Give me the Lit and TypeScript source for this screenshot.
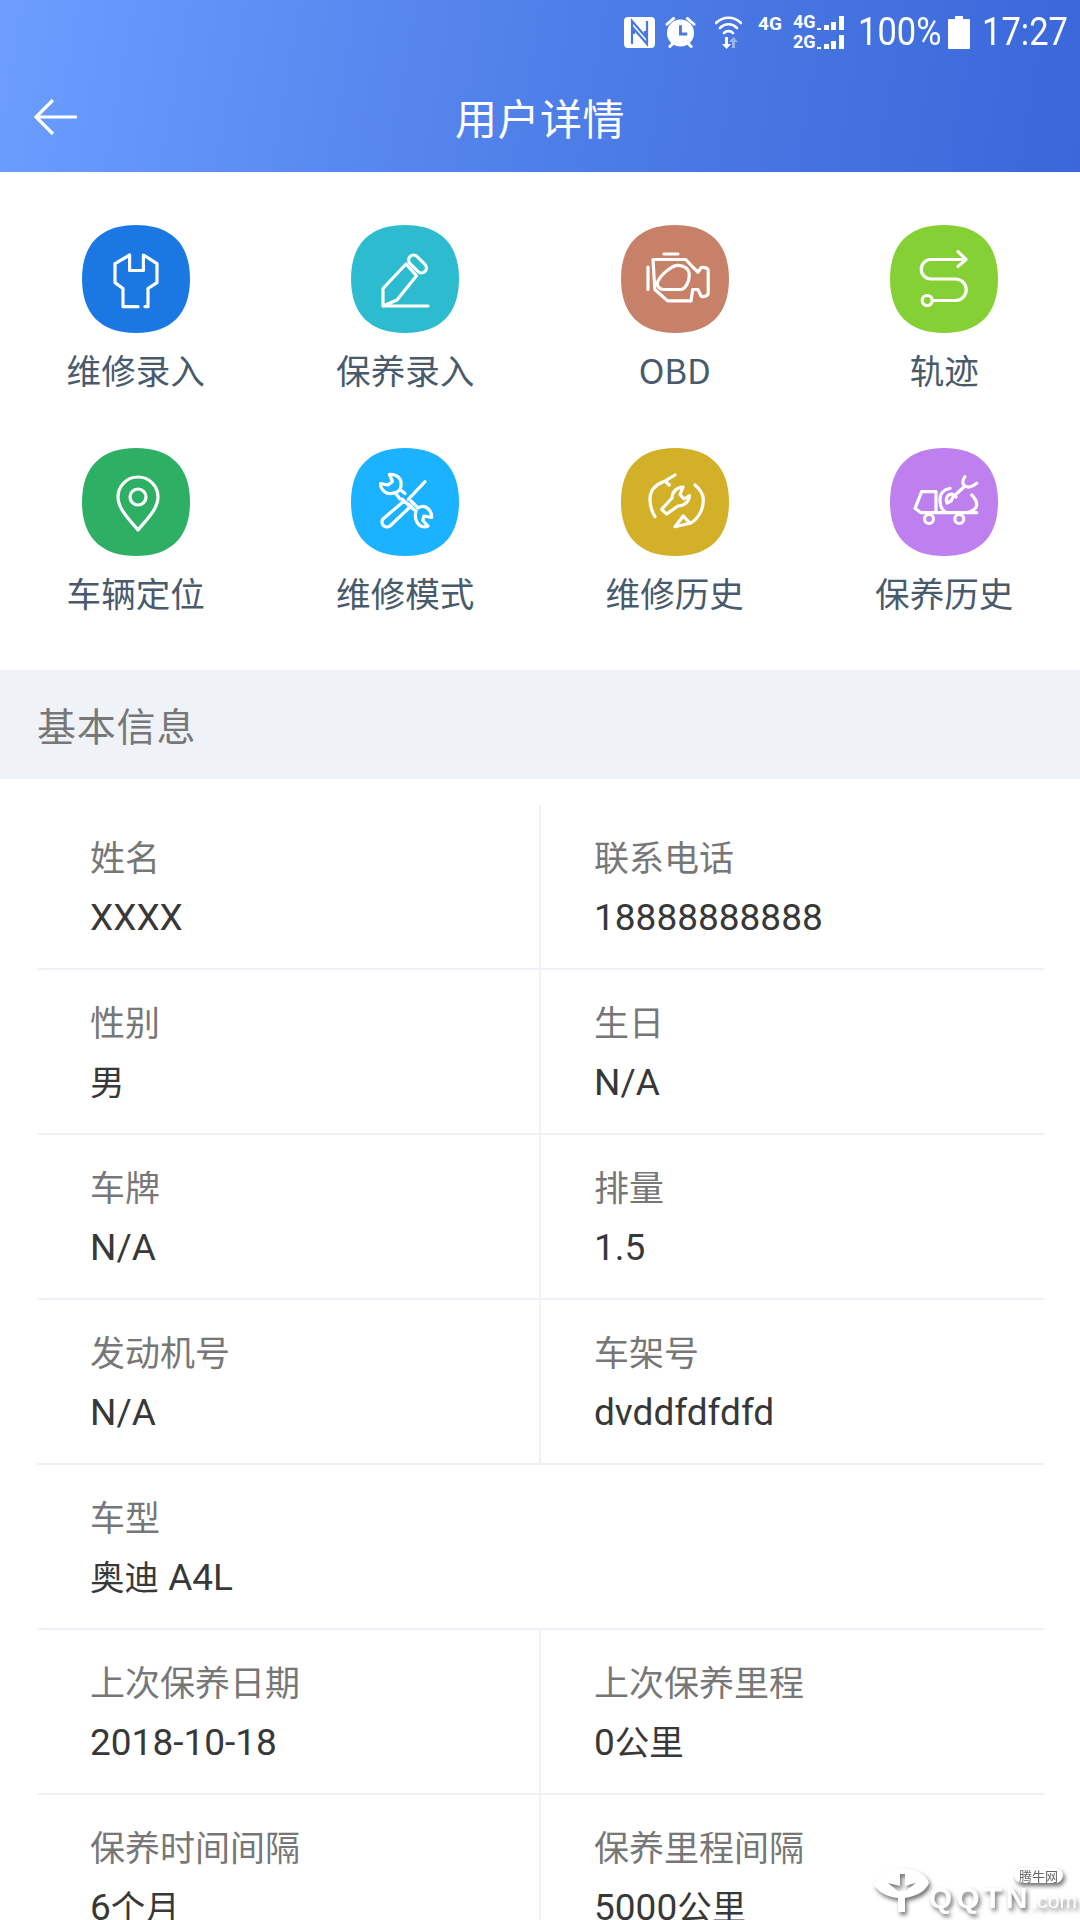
import { LitElement, html, css, svg } from "lit";
import { customElement } from "lit/decorators.js";

const menu = [
  { label: "维修录入", color: "#1b78e2", art: svg`<path d="M56 81.7H41V63.5L33 57.6V38.6L47.6 30V45.5H61.4V30L75 38.6V57.6L66 63.5V81.7H63"/>` },
  { label: "保养录入", color: "#2dbccf", art: svg`<path d="M32 81H77M32 81V63.5L55 39L65.5 50.7L46 75L32 81Z"/><rect x="56" y="34" width="21" height="10" rx="5" transform="rotate(45 66.5 39)"/>` },
  { label: "OBD", color: "#c78168", art: svg`<path d="M43 29H57M27 42V64.5M32 34.5H64.8L71.7 42L76.9 47.2L80.3 42.5C84 42 87.2 43 87.2 46V68C87.2 71 83 72 80.3 71.4L76.9 64.5H71.7L70 75.9H46.6L33.8 64.5Z"/><path d="M37 55.9C40 50 50 41 56.2 40.3C63 40 68.3 44 68.3 50C68.3 57 64 64.5 59.7 64.5H42.4C38 64.5 35 60 37 55.9Z"/>` },
  { label: "轨迹", color: "#85d034", art: svg`<path d="M75.5 34.5H41A9.75 9.75 0 0 0 41 54H65.5A10.75 10.75 0 0 1 65.5 75.5H42.5M68 26.6L76 34.5L68 41.4"/><circle cx="37.2" cy="75.5" r="5"/>` },
  { label: "车辆定位", color: "#2db064", art: svg`<path d="M56 82C50 74 36 62 36 49A20 20 0 0 1 76 49C76 62 62 74 56 82Z"/><circle cx="56" cy="49" r="8"/>` },
  { label: "维修模式", color: "#1bb2ff", art: svg`<path d="M74 33.7L57.3 51.3"/><path d="M53 53L32 71A5 5 0 0 0 39 78L60 58ZM51 51L61 60"/><path d="M58 58L65 63C63 70 66 77 71 78.5C73 79 75 79 77 78L71.7 72.5L73 68L80.7 69.5C81 63 76 58 70.7 58.5C69 58.7 68 59 67 60L60 53"/><path d="M38.5 26.5C44 26 49 29 50 34C50.5 37 50 39 49 41.5L54 45.5M29.5 35.5L37 37L41.5 33.5L38.5 26.5M29.5 35.5C29 40 33 45 38 45.5C40 45.7 42 45.5 44 44.5L49 51M49 41.5L45 45"/>` },
  { label: "维修历史", color: "#d2b128", art: svg`<path d="M42.3 33.7C34 37 29 43 29 51C29 58 31 64 34 68.7"/><path d="M54 27L44 33L48.3 37"/><path d="M74 37C79 41 82.3 46 82.3 52C82.3 63 76 72 69 75.3"/><path d="M54 78.7L69 75.3L62.3 68Z"/><path d="M40.7 61.3L45.7 66L57 58C62 58 68 55 68.5 47.5L63 51L59 46.5L62 39C56 39 51 44 51 50Z"/>` },
  { label: "保养历史", color: "#be80ef", art: svg`<path d="M31.7 43.7H46V64.7M31.7 43.7L25 60.3L31 64.7H86.7"/><circle cx="39" cy="71" r="4.5"/><circle cx="69.3" cy="71" r="4.5"/><path d="M60 40.3C53 42 50 46 50 51C50 57 52 62 55 63.7"/><path d="M81.7 47C85 50 86.7 53 86.7 57C86.7 60 82 64 76.7 64.7"/><path d="M63 49L75 38M75 28.7C72 33 72 36 75 38C78 40 82 39 86.7 35.3M57 55C55 50 58 46 62 46L66 49M63 49L61 53L57 55"/>` },
];

const rows: Array<Array<[string, string]>> = [
  [["姓名", "XXXX"], ["联系电话", "18888888888"]],
  [["性别", "男"], ["生日", "N/A"]],
  [["车牌", "N/A"], ["排量", "1.5"]],
  [["发动机号", "N/A"], ["车架号", "dvddfdfdfd"]],
  [["车型", "奥迪 A4L"]],
  [["上次保养日期", "2018-10-18"], ["上次保养里程", "0公里"]],
  [["保养时间间隔", "6个月"], ["保养里程间隔", "5000公里"]],
];

const value = (text: string) =>
  text
    .split(/([\u4e00-\u9fff]+)/)
    .map((part, i) => (i % 2 ? html`<span class="cjk">${part}</span>` : part));

@customElement("app-root")
export class AppRoot extends LitElement {
  static styles = css`
    :host {
      display: block;
      position: relative;
      width: 1080px;
      height: 1920px;
      overflow: hidden;
      background: #fff;
      font-family: "Noto Sans CJK SC", "Noto Sans", sans-serif;
    }
    .header {
      height: 172px;
      background: linear-gradient(100deg, #6c9dff 0%, #4f7fe8 50%, #3a67d9 100%);
      color: #fff;
      display: flex;
      flex-direction: column;
    }
    .status {
      height: 64px;
      display: flex;
      justify-content: flex-end;
      align-items: center;
      padding: 0 15px 0 0;
      font-family: Roboto, sans-serif;
    }
    .status svg { display: block; flex: none; fill: #fff; }
    .alarm { margin-left: 10px; }
    .wifi { margin-left: 19px; }
    .net {
      font-size: 19px;
      font-weight: 700;
      line-height: 20px;
      width: 24px;
      margin: 0 11px 16px 16px;
    }
    .net2 {
      font-size: 18px;
      font-weight: 700;
      line-height: 20px;
      width: 24px;
      display: flex;
      flex-direction: column;
    }
    .bat { margin-left: 8px; }
    .big {
      font-size: 39px;
      line-height: 44px;
      transform: scaleX(0.885);
      transform-origin: left center;
      white-space: nowrap;
    }
    .pct { width: 82px; margin-left: 14px; }
    .time { width: 83px; margin-left: 12px; }
    .nav {
      flex: 1;
      position: relative;
      display: flex;
      align-items: center;
      justify-content: center;
      padding-bottom: 3px;
      font-size: 42px;
      letter-spacing: 0.5px;
    }
    .back { position: absolute; left: 33px; top: 34px; }
    .menu {
      display: grid;
      grid-template-columns: repeat(4, 269.5px);
      row-gap: 56px;
      padding: 53px 1px 55px;
    }
    .item { display: flex; flex-direction: column; align-items: center; }
    .item svg { display: block; }
    .item .art { fill: none; stroke: #fff; stroke-width: 3.2; stroke-linejoin: round; stroke-linecap: round; }
    .lbl {
      margin-top: 13px;
      font-size: 34.6px;
      line-height: 46px;
      color: #485a6b;
    }
    .band {
      height: 109px;
      box-sizing: border-box;
      display: flex;
      align-items: center;
      padding: 0 0 2px 37px;
      background: #eff3f7;
      color: #777;
      font-size: 39px;
      letter-spacing: 0.8px;
    }
    .table { margin: 26px 36px 0 37px; }
    .row { display: flex; height: 165px; box-sizing: border-box; border-bottom: 2px solid #eef2f6; }
    .cell { box-sizing: border-box; padding: 28px 0 0 53px; }
    .cell.first { width: 504px; border-right: 2px solid #eef2f6; }
    .cell.solo { border-right: none; }
    .k { font-size: 35px; line-height: 46px; color: #777; }
    .v {
      font-family: Roboto, "Noto Sans CJK SC", sans-serif;
      font-size: 37px;
      line-height: 46px;
      margin-top: 16px;
      color: #383838;
      white-space: nowrap;
    }
    .cjk { font-family: "Noto Sans CJK SC", sans-serif; font-size: 34.5px; line-height: 0; }
    .mark {
      position: absolute;
      right: 3px;
      bottom: 8px;
      display: flex;
      align-items: flex-end;
      color: #fff;
      font-family: "Liberation Sans", sans-serif;
      font-weight: 700;
      filter: drop-shadow(2px 3px 2px rgba(0,0,0,.55));
    }
    .mark svg { display: block; }
    .mtext { font-size: 30px; line-height: 22px; letter-spacing: 4px; position: relative; white-space: nowrap; }
    .mtext small { font-size: 21px; font-weight: 400; letter-spacing: 0; }
    .tag {
      position: absolute;
      right: 14px;
      top: -19px;
      font-size: 13px;
      font-weight: 400;
      line-height: 15px;
      padding: 0 5px;
      border-radius: 8px;
      background: #fff;
      color: #666;
      letter-spacing: 0;
      font-family: "Noto Sans CJK SC", sans-serif;
    }
  `;

  render() {
    return html`
      <div class="header">
        <div class="status">
          <svg width="31" height="31" viewBox="0 0 31 31">
            <rect width="31" height="31" rx="4"/>
            <path d="M8 27V4L21 19V14M23 4V27L10 12V17" fill="none" stroke="#4a78e2" stroke-width="2.2"/>
          </svg>
          <svg class="alarm" width="31" height="32" viewBox="0 0 32 32">
            <circle cx="16" cy="17" r="14"/>
            <path d="M16 9V18H23" fill="none" stroke="#4a78e2" stroke-width="3"/>
            <path d="M2 8L9 2M30 8L23 2M5 31L8 28M27 31L24 28" stroke="#fff" stroke-width="3" stroke-linecap="round"/>
          </svg>
          <svg class="wifi" width="27" height="34" viewBox="0 0 27 34">
            <path d="M1 8C8 1 19 1 26 8M5 13C10 8 17 8 22 13M9 18C11.500 15.500 15.500 15.500 18 18" fill="none" stroke="#fff" stroke-width="2.6" stroke-linecap="round"/>
            <path d="M10 22H13V29H16L11.500 34L7 29H10Z"/>
            <path d="M17 33H20V27H23L18.500 22L14 27H17Z" opacity=".45"/>
          </svg>
          <div class="net">4G</div>
          <div class="net2"><span>4G</span><span>2G</span></div>
          <svg width="27" height="33" viewBox="0 0 27 33">
            <path d="M0 12L4 12V14H0ZM7 9H12V14H7ZM14 6H19V14H14ZM22 0H27V14H22ZM0 31L4 31V33H0ZM7 28H12V33H7ZM14 25H19V33H14ZM22 19H27V33H22Z"/>
          </svg>
          <div class="big pct">100%</div>
          <svg class="bat" width="22" height="33" viewBox="0 0 22 33"><path d="M7 0H15V3H21A1 1 0 0 1 22 4V32A1 1 0 0 1 21 33H1A1 1 0 0 1 0 32V4A1 1 0 0 1 1 3H7Z"/></svg>
          <div class="big time">17:27</div>
        </div>
        <div class="nav">
          <svg class="back" width="46" height="38" viewBox="0 0 46 38">
            <path d="M44 19H3M20 2L3 19L20 36" fill="none" stroke="#fff" stroke-width="3.2"/>
          </svg>
          用户详情
        </div>
      </div>

      <div class="menu">
        ${menu.map(
          (m) => html`
            <div class="item">
              <svg width="108" height="108" viewBox="0 0 108 108">
                <path fill=${m.color} d="M54 0C89 0 108 19 108 54C108 89 89 108 54 108C19 108 0 89 0 54C0 19 19 0 54 0Z"/>
                <g class="art">${m.art}</g>
              </svg>
              <div class="lbl">${m.label}</div>
            </div>
          `
        )}
      </div>

      <div class="band">基本信息</div>

      <div class="table">
        ${rows.map(
          (r) => html`
            <div class="row">
              ${r.map(
                ([k, v], i) => html`
                  <div class="cell ${i === 0 ? "first" : ""} ${r.length === 1 ? "solo" : ""}">
                    <div class="k">${k}</div>
                    <div class="v">${value(v)}</div>
                  </div>
                `
              )}
            </div>
          `
        )}
      </div>

      <div class="mark">
        <svg width="55" height="44" viewBox="0 0 55 44">
          <path fill="#fff" fill-rule="evenodd" d="M27 0C43 1 53 7 55 15C51 25 41 28 31 30V44H24V30C13 29 4 24 0 17C3 7 13 1 27 0ZM26 6V18L14 15L24 23H31L42 15L31 18V6Z"/>
        </svg>
        <div class="mtext"><span class="tag">腾牛网</span>QQTN<small>.com</small></div>
      </div>
    `;
  }
}
